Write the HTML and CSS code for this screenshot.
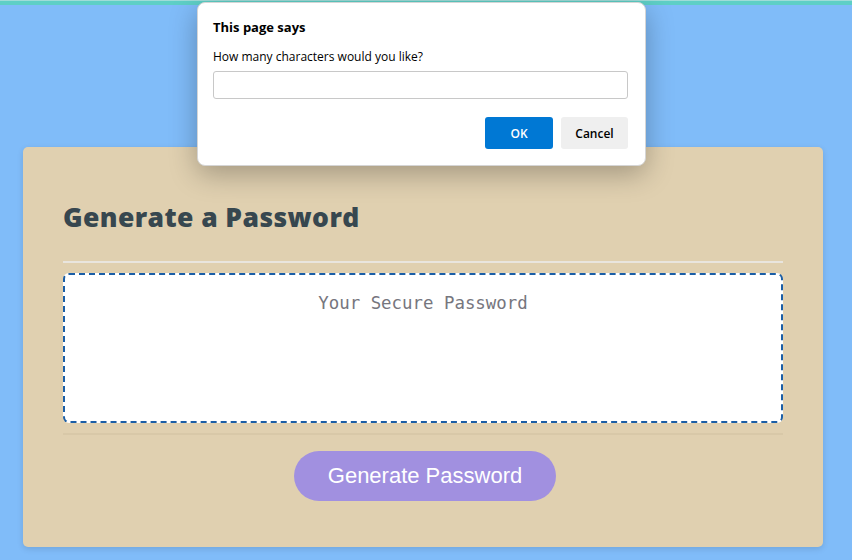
FILE: index.html
```html
<!DOCTYPE html>
<html lang="en">
<head>
<meta charset="utf-8">
<title>Password Generator</title>
<link rel="stylesheet" href="styles.css">
</head>
<body>
<div class="topbar"></div>
<main class="wrapper">
  <section class="card">
    <header class="card-header">
      <h2>Generate a Password</h2>
    </header>
    <div class="card-body">
      <textarea readonly class="password" placeholder="Your Secure Password" aria-label="Generated Password"></textarea>
    </div>
    <footer class="card-footer">
      <button class="btn">Generate Password</button>
    </footer>
  </section>
</main>
<div class="dialog" role="dialog">
  <div class="dialog-title">This page says</div>
  <div class="dialog-msg">How many characters would you like?</div>
  <input class="dialog-input" type="text">
  <div class="dialog-actions">
    <button class="dbtn dbtn-ok">OK</button>
    <button class="dbtn dbtn-cancel">Cancel</button>
  </div>
</div>
</body>
</html>
```
FILE: styles.css
```css
* { box-sizing: border-box; }
html, body { height: 100%; }
body {
  margin: 0;
  background: #80bcf9;
  font-family: "Liberation Sans", Arial, sans-serif;
  overflow: hidden;
}
.topbar {
  height: 5px;
  background: #5ecfc6;
  border-top: 1px solid #9fdcd8;
}
.wrapper {
  padding: 142px 29px 0 23px;
}
.card {
  width: 800px;
  height: 400px;
  background: #e0d0b0;
  border-radius: 5px;
  padding: 0 40px;
  box-shadow: 0 2px 6px rgba(0,0,0,0.12);
}
.card-header {
  padding-top: 52px;
  border-bottom: 2px solid #e9e5de;
  height: 116px;
}
.card-header h2 {
  margin: 0;
  font-family: "Open Sans", "Noto Sans", sans-serif;
  font-weight: 800;
  font-size: 26.5px;
  line-height: 36px;
  color: #37474f;
  letter-spacing: 0.4px;
}
.card-body {
  padding: 10px 0 10px;
  border-bottom: 2px solid #d8c8a8;
}
.password {
  display: block;
  width: 100%;
  height: 150px;
  border: 2px dashed #1b5ea6;
  border-radius: 6px;
  background: #fff;
  resize: none;
  padding: 18px 10px 14px;
  text-align: center;
  font-family: "DejaVu Sans Mono", "Liberation Mono", monospace;
  font-size: 17.4px;
  color: #333;
  outline: none;
}
.password::placeholder { color: #76767e; }
.card-footer {
  display: flex;
  justify-content: center;
  padding-top: 16px;
  padding-left: 4px;
}
.btn {
  width: 262px;
  height: 50px;
  border: none;
  border-radius: 25px;
  background: #a190e0;
  color: #fff;
  font-family: "Liberation Sans", Arial, sans-serif;
  font-size: 22px;
  cursor: pointer;
}
.dialog {
  position: absolute;
  left: 197px;
  top: 2px;
  width: 449px;
  height: 164px;
  background: #fff;
  border: 1px solid #d5d5d5;
  border-radius: 8px;
  box-shadow: 0 8px 28px rgba(0,0,0,0.28);
  padding: 15px 17px 0 15px;
  font-family: "Open Sans", "Noto Sans", sans-serif;
  color: #000;
}
.dialog-title {
  font-weight: 700;
  font-size: 13px;
  line-height: 18px;
}
.dialog-msg {
  margin-top: 13px;
  font-size: 12px;
  line-height: 16px;
}
.dialog-input {
  display: block;
  margin-top: 6px;
  width: 415px;
  height: 28px;
  border: 1px solid #c8c8c8;
  border-radius: 3px;
  outline: none;
}
.dialog-actions {
  display: flex;
  justify-content: flex-end;
  gap: 8px;
  margin-top: 18px;
}
.dbtn {
  width: 68px;
  height: 32px;
  border: none;
  border-radius: 3px;
  font-family: "Open Sans", "Noto Sans", sans-serif;
  font-size: 12px;
  font-weight: 600;
}
.dbtn-ok { background: #0078d4; color: #fff; }
.dbtn-cancel { width: 67px; background: #efefef; color: #000; }
```
